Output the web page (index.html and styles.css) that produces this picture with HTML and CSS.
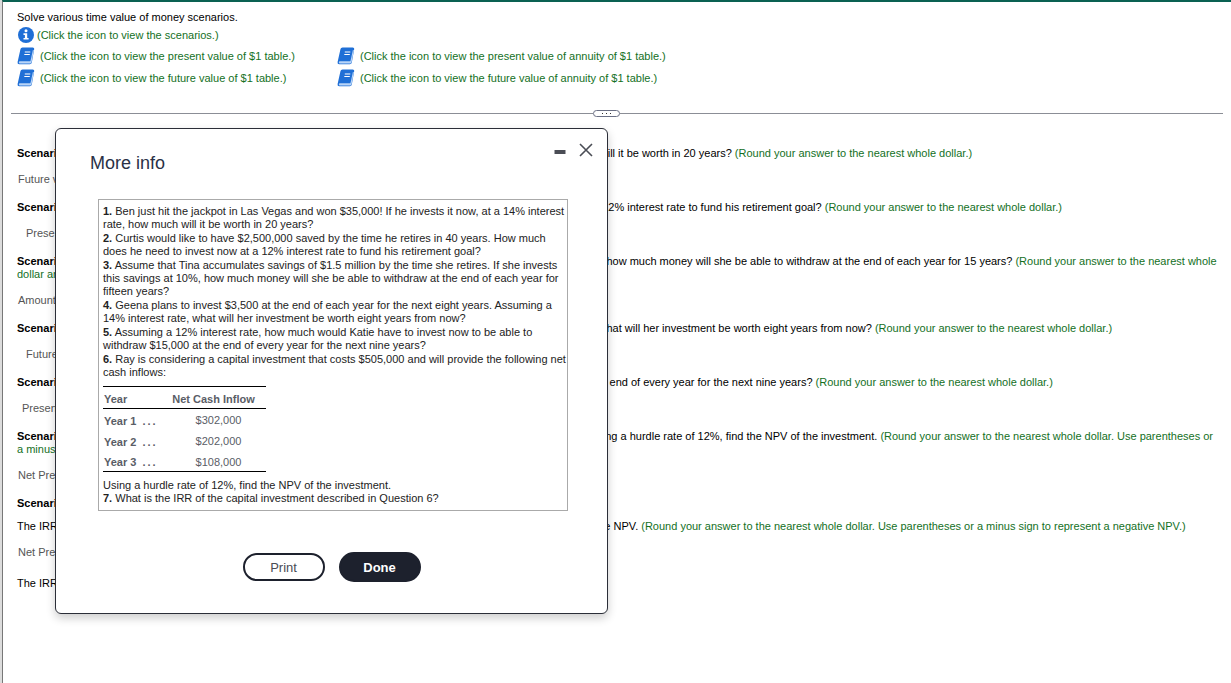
FILE: index.html
```html
<!DOCTYPE html>
<html lang="en">
<head>
    <meta charset="UTF-8">
    <title>Time value of money</title>
    <link rel="stylesheet" href="styles.css">
</head>
<body>
    <svg class="symbols" aria-hidden="true">
        <symbol id="book" viewBox="0 0 18 18">
            <path d="M5.500.500h10.300q1.700 0 1.400 1.500L14.800 15.500q-.3 1.800-2 1.800H2.200Q.2 17.300.600 15L3.500 2Q3.800.500 5.500.500z" fill="#1f6fd6"/>
            <path d="M2.300 14.300h10.200q.9 0 1.100-.9L15.900 3l1 .3-2.300 11.700q-.3 1.500-1.600 1.500H2.500q-1.300-.3-.2-2.200z" fill="#b9d5f8"/>
            <path d="M7.800 5h5.500M7.300 7.500h5.500" stroke="#fff" stroke-width="1.200"/>
        </symbol>
    </svg>

    <main class="page">
        <section class="intro">
            <p>Solve various time value of money scenarios.</p>
            <a class="info-link" href="#scenarios">
                <svg class="icon" viewBox="0 0 18 18">
                    <circle cx="9" cy="9" r="8" fill="#1f6fd6"/>
                    <circle cx="9" cy="4.800" r="1.500" fill="#fff"/>
                    <path d="M6.500 7.300h3.700v4.700h1.400v1.600H6.500V12h1.400V8.900H6.500z" fill="#fff"/>
                </svg>
                (Click the icon to view the scenarios.)
            </a>
            <div class="tables">
                <a href="#pv"><svg class="icon"><use href="#book"/></svg>(Click the icon to view the present value of $1 table.)</a>
                <a href="#pva"><svg class="icon"><use href="#book"/></svg>(Click the icon to view the present value of annuity of $1 table.)</a>
                <a href="#fv"><svg class="icon"><use href="#book"/></svg>(Click the icon to view the future value of $1 table.)</a>
                <a href="#fva"><svg class="icon"><use href="#book"/></svg>(Click the icon to view the future value of annuity of $1 table.)</a>
            </div>
        </section>

        <div class="divider">
            <button class="handle" aria-label="Resize"><i></i><i></i><i></i></button>
        </div>

        <section class="questions">
            <p class="question"><b>Scenario 1.</b> Ben just hit the jackpot in Las Vegas and won $35,000! If he invests it now, at 14% interest rate, how much will it be worth in 20 years? <span class="hint">(Round your answer to the nearest whole dollar.)</span></p>
            <p class="answer">Future value</p>

            <p class="question"><b>Scenario 2.</b> Curtis would like $2,500,000 saved by the time he retires at 60. How much does he need to invest now at a 12% interest rate to fund his retirement goal? <span class="hint">(Round your answer to the nearest whole dollar.)</span></p>
            <p class="answer indent">Present value</p>

            <p class="question"><b>Scenario 3.</b> Assume that Tina accumulates savings of $1.5 million by time she retires. If she invests this savings at 10%, how much money will she be able to withdraw at the end of each year for 15 years? <span class="hint">(Round your answer to the nearest whole dollar amount.)</span></p>
            <p class="answer">Amount</p>

            <p class="question"><b>Scenario 4.</b> Geena plans to invest $3,500 at the end of each year for the next eight years. Assuming 14% interest rate, what will her investment be worth eight years from now? <span class="hint">(Round your answer to the nearest whole dollar.)</span></p>
            <p class="answer indent">Future value</p>

            <p class="question"><b>Scenario 5.</b> Assuming 12% interest rate, how much would Katie have to invest now to be able to withdraw $15,000 at the end of every year for the next nine years? <span class="hint">(Round your answer to the nearest whole dollar.)</span></p>
            <p class="answer half-indent">Present value</p>

            <p class="question"><b>Scenario 6.</b> Ray is considering capital investment that costs $505,000 and will provide the following net cash inflows. Using a hurdle rate of 12%, find the NPV of the investment. <span class="hint">(Round your answer to the nearest whole dollar. Use parentheses or a minus sign to represent a negative NPV.)</span></p>
            <p class="answer">Net Present Value</p>

            <p class="question"><b>Scenario 7.</b> What is the IRR of the capital investment described in Question 6?</p>
            <p class="step">The IRR is the interest rate at which the investment NPV is zero. Try several different discount rates below to calculate the NPV. <span class="hint">(Round your answer to the nearest whole dollar. Use parentheses or a minus sign to represent a negative NPV.)</span></p>
            <p class="answer">Net Present Value</p>
            <p class="result">The IRR is</p>
        </section>

        <div class="dialog" role="dialog" aria-labelledby="dialogTitle">
            <header class="dialog-header">
                <h2 id="dialogTitle">More info</h2>
                <div class="window-controls">
                    <button aria-label="Minimize"><svg viewBox="0 0 14 14"><path d="M1.500 9h11" stroke="#4a4d55" stroke-width="4"/></svg></button>
                    <button aria-label="Close"><svg viewBox="0 0 14 14"><path d="M1 1l12 12M13 1l-12 12" stroke="#4a4d55" stroke-width="1.600"/></svg></button>
                </div>
            </header>

            <div class="scenarios" id="scenarios">
                <p><b>1.</b> Ben just hit the jackpot in Las Vegas and won $35,000! If he invests it now, at a 14% interest<br>rate, how much will it be worth in 20 years?</p>
                <p><b>2.</b> Curtis would like to have $2,500,000 saved by the time he retires in 40 years. How much<br>does he need to invest now at a 12% interest rate to fund his retirement goal?</p>
                <p><b>3.</b> Assume that Tina accumulates savings of $1.5 million by the time she retires. If she invests<br>this savings at 10%, how much money will she be able to withdraw at the end of each year for<br>fifteen years?</p>
                <p><b>4.</b> Geena plans to invest $3,500 at the end of each year for the next eight years. Assuming a<br>14% interest rate, what will her investment be worth eight years from now?</p>
                <p><b>5.</b> Assuming a 12% interest rate, how much would Katie have to invest now to be able to<br>withdraw $15,000 at the end of every year for the next nine years?</p>
                <p><b>6.</b> Ray is considering a capital investment that costs $505,000 and will provide the following net<br>cash inflows:</p>
                <table class="inflows">
                    <thead>
                        <tr><th>Year</th><th>Net Cash Inflow</th></tr>
                    </thead>
                    <tbody>
                        <tr><th>Year 1 <span class="dots">...</span></th><td>$302,000</td></tr>
                        <tr><th>Year 2 <span class="dots">...</span></th><td>$202,000</td></tr>
                        <tr><th>Year 3 <span class="dots">...</span></th><td>$108,000</td></tr>
                    </tbody>
                </table>
                <p>Using a hurdle rate of 12%, find the NPV of the investment.<br><b>7.</b> What is the IRR of the capital investment described in Question 6?</p>
            </div>

            <footer class="dialog-footer">
                <button class="pill">Print</button>
                <button class="pill primary">Done</button>
            </footer>
        </div>
    </main>
</body>
</html>
```
FILE: styles.css
```css
* {
    box-sizing: border-box;
}

body {
    margin: 0;
    font-family: "Liberation Sans", Arial, sans-serif;
    font-size: 11px;
    line-height: 13px;
    color: #000;
    background: #dcdcdc;
}

p, h2 {
    margin: 0;
}

a {
    color: #14701e;
    text-decoration: none;
}

button {
    font-family: inherit;
    cursor: pointer;
}

.symbols {
    display: none;
}

.page {
    position: relative;
    min-height: 100vh;
    margin-left: 2px;
    border-left: 1px solid #777;
    border-top: 2px solid #0a6152;
    background: #fff;
}

.intro {
    padding: 9px 14px 0;
}

.icon {
    width: 18px;
    height: 18px;
    flex: none;
}

.info-link {
    display: flex;
    width: max-content;
    align-items: center;
    gap: 2px;
    margin-top: 2px;
}

.tables {
    display: grid;
    grid-template-columns: 320px max-content;
    row-gap: 4px;
    margin-top: 3px;
}

.tables a {
    display: flex;
    align-items: center;
    gap: 5px;
}

.divider {
    display: flex;
    align-items: center;
    margin: 23px 8px 0;
}

.divider::before,
.divider::after {
    content: "";
    flex: 1;
    height: 1px;
    background: #8b8e96;
}

.divider::before {
    flex: 0 0 48%;
}

.handle {
    display: flex;
    justify-content: center;
    align-items: center;
    gap: 3px;
    width: 27px;
    height: 7px;
    padding: 0;
    border: 1px solid #6b7085;
    border-radius: 4px;
    background: #fff;
}

.handle i {
    width: 1px;
    height: 1px;
    background: #333;
}

.questions {
    padding: 30px 9px 0 14px;
}

.answer {
    margin: 13px 0 15px;
    padding-left: 1px;
    color: #555;
}

.answer.indent {
    padding-left: 9px;
}

.answer.half-indent {
    padding-left: 5px;
}

.hint {
    color: #14701e;
}

.step {
    margin-top: 10px;
}

.result {
    margin-top: 18px;
}

.dialog {
    position: absolute;
    top: 126px;
    left: 52px;
    width: 553px;
    padding: 12px 12px 31px 34px;
    border: 1px solid #2b2e38;
    border-radius: 6px;
    background: #fff;
    box-shadow: 0 4px 10px rgba(0, 0, 0, 0.2);
}

.dialog-header {
    display: flex;
    justify-content: space-between;
    align-items: flex-start;
}

.dialog-header h2 {
    margin-top: 10px;
    font-size: 18px;
    line-height: 24px;
    font-weight: normal;
    color: #2a3146;
}

.window-controls {
    display: flex;
    gap: 8px;
}

.window-controls button {
    width: 18px;
    height: 18px;
    padding: 2px;
    border: 0;
    background: none;
}

.window-controls svg {
    display: block;
}

.scenarios {
    width: 470px;
    margin: 24px 0 0 8px;
    padding: 5px 4px;
    border: 1px solid #aaa;
    color: #222;
    white-space: nowrap;
}

.scenarios p + p {
    margin-top: 1px;
}

.inflows {
    width: 163px;
    margin: 7px 0;
    border-collapse: collapse;
    border-top: 1px solid #000;
    border-bottom: 1px solid #000;
    color: #5a5d66;
}

.inflows th,
.inflows td {
    height: 21px;
    padding: 4px 1px 0;
    text-align: left;
}

.inflows thead th {
    height: 22px;
    border-bottom: 1px solid #000;
}

.inflows th + th,
.inflows td {
    width: 105px;
    text-align: center;
}

.inflows td {
    padding: 3px 1px 0 11px;
}

.dots {
    margin-left: 3px;
    letter-spacing: 2px;
}

.dialog-footer {
    display: flex;
    justify-content: center;
    align-items: center;
    gap: 14px;
    margin: 41px 22px 0 0;
}

.pill {
    width: 82px;
    height: 28px;
    border: 2px solid #1d212d;
    border-radius: 15px;
    background: #fff;
    font-size: 13px;
    color: #4a4d55;
}

.pill.primary {
    height: 30px;
    background: #1d212d;
    color: #fff;
    font-weight: bold;
}
```
